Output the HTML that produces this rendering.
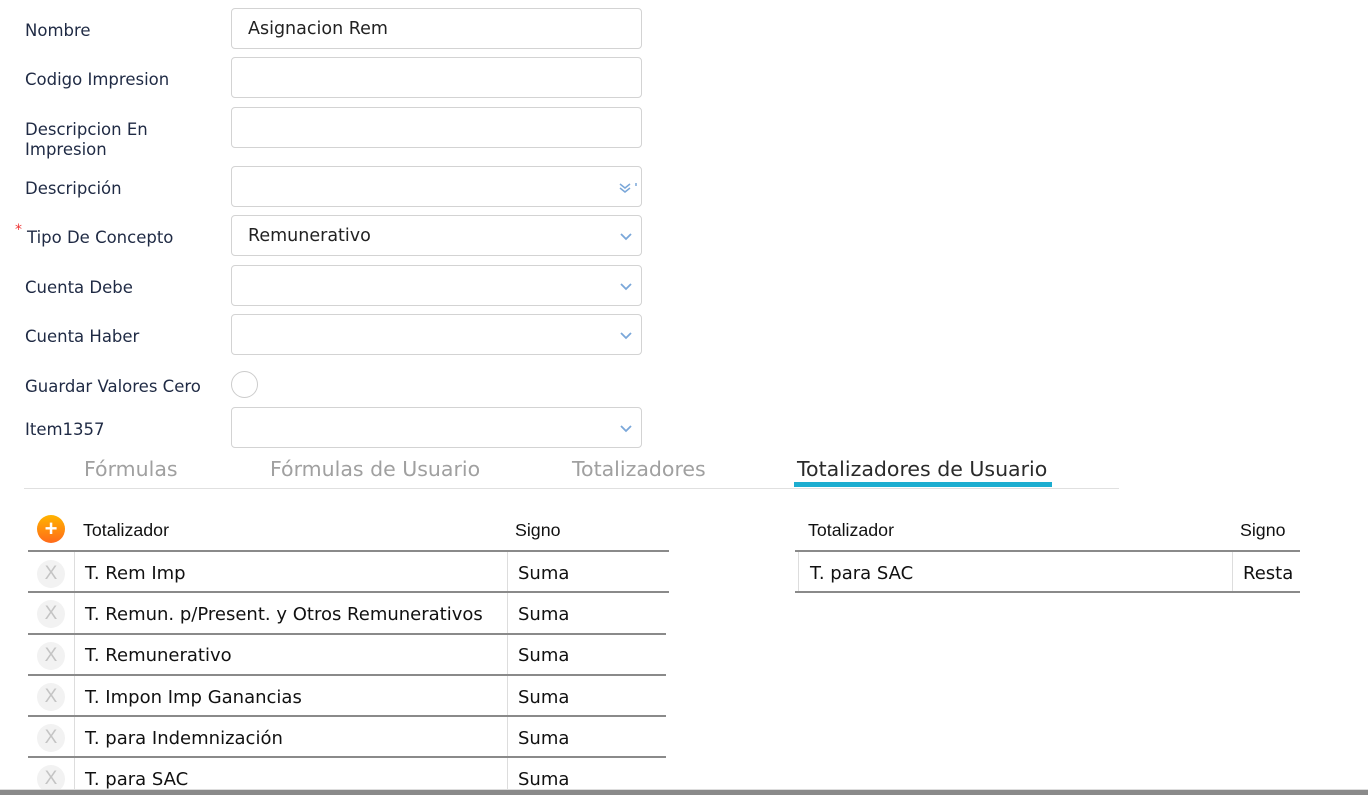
<!DOCTYPE html>
<html><head><meta charset="utf-8"><style>
*{margin:0;padding:0;box-sizing:border-box}
body{width:1368px;height:795px;background:#fff;position:relative;overflow:hidden;font-family:"DejaVu Sans","Liberation Sans",sans-serif}
.l{position:absolute;left:25px;font-size:16.5px;color:#1f2a44;line-height:20px;margin-top:1px}
.in{position:absolute;left:231px;width:411px;height:41px;border:1px solid #d3d3d3;border-radius:4px;font-size:17.5px;color:#222;padding:10px 16px;line-height:21px}
.chev{position:absolute;right:8px;top:15px}
.tab{position:absolute;top:457px;font-size:20.5px;color:#a0a0a0;font-family:"DejaVu Sans",sans-serif}
.h{position:absolute;font-family:"Liberation Sans",sans-serif;font-size:17.8px;color:#111}
.line{position:absolute;height:2px;background:#8a8a8a}
.vl{position:absolute;width:1px;background:#ddd}
.c{position:absolute;font-size:18px;color:#111}
.x{position:absolute;left:37px;width:28px;height:28px;border-radius:50%;background:#f2f2f2;color:#c4c4c4;font-family:"Liberation Sans",sans-serif;font-size:19px;text-align:center;line-height:28px}
</style></head><body>
<div class="l" style="top:20px">Nombre</div>
<div class="in" style="top:8px">Asignacion Rem</div>
<div class="l" style="top:69px">Codigo Impresion</div>
<div class="in" style="top:57px"></div>
<div class="l" style="top:119px">Descripcion En<br>Impresion</div>
<div class="in" style="top:107px"></div>
<div class="l" style="top:178px">Descripción</div>
<div class="in" style="top:166px"><svg class="chev" style="right:2px;top:13px" width="22" height="14"><path d="M3 4l5 4 5-4M3 8l5 4 5-4" stroke="#7aa7d9" stroke-width="1.5" fill="none"/><path d="M19 3v3" stroke="#7aa7d9" stroke-width="1.5"/></svg></div>
<div class="l" style="top:227px;left:27px">Tipo De Concepto</div>
<div style="position:absolute;left:15px;top:222px;color:#e33;font-size:14px">*</div>
<div class="in" style="top:215px">Remunerativo<svg class="chev" width="14" height="10"><path d="M2 3l5 5 5-5" stroke="#7aa7d9" stroke-width="1.8" fill="none"/></svg></div>
<div class="l" style="top:277px">Cuenta Debe</div>
<div class="in" style="top:265px"><svg class="chev" width="14" height="10"><path d="M2 3l5 5 5-5" stroke="#7aa7d9" stroke-width="1.8" fill="none"/></svg></div>
<div class="l" style="top:326px">Cuenta Haber</div>
<div class="in" style="top:314px"><svg class="chev" width="14" height="10"><path d="M2 3l5 5 5-5" stroke="#7aa7d9" stroke-width="1.8" fill="none"/></svg></div>
<div class="l" style="top:376px">Guardar Valores Cero</div>
<div style="position:absolute;left:231px;top:371px;width:27px;height:27px;border:1px solid #ccc;border-radius:50%"></div>
<div class="l" style="top:419px">Item1357</div>
<div class="in" style="top:407px"><svg class="chev" width="14" height="10"><path d="M2 3l5 5 5-5" stroke="#7aa7d9" stroke-width="1.8" fill="none"/></svg></div>

<div class="tab" style="left:84px">Fórmulas</div>
<div class="tab" style="left:270px">Fórmulas de Usuario</div>
<div class="tab" style="left:572px">Totalizadores</div>
<div class="tab" style="left:797px;color:#2a2a2a">Totalizadores de Usuario</div>
<div style="position:absolute;left:24px;top:488px;width:1095px;height:1px;background:#e0e0e0"></div>
<div style="position:absolute;left:794px;top:482px;width:258px;height:5px;background:#1cadd0"></div>

<div style="position:absolute;left:37px;top:515px;width:28px;height:28px;border-radius:50%;background:linear-gradient(#ffb400,#ff6a1a);color:#fff;font-family:'Liberation Sans';font-weight:bold;font-size:22px;text-align:center;line-height:27px">+</div>
<div class="h" style="left:83px;top:520px">Totalizador</div>
<div class="h" style="left:515px;top:520px">Signo</div>
<div class="line" style="left:28px;top:550px;width:641px"></div>
<div class="vl" style="left:74px;top:552px;height:243px"></div>
<div class="vl" style="left:507px;top:552px;height:243px"></div>
<div class="line" style="left:28px;top:591px;width:641px"></div>
<div class="line" style="left:28px;top:633px;width:638px"></div>
<div class="line" style="left:28px;top:674px;width:638px"></div>
<div class="line" style="left:28px;top:715px;width:638px"></div>
<div class="line" style="left:28px;top:756px;width:638px"></div>

<div class="x" style="top:560px">X</div><div class="c" style="left:85px;top:563px">T. Rem Imp</div><div class="c" style="left:518px;top:563px">Suma</div>
<div class="x" style="top:600px">X</div><div class="c" style="left:85px;top:604px">T. Remun. p/Present. y Otros Remunerativos</div><div class="c" style="left:518px;top:604px">Suma</div>
<div class="x" style="top:642px">X</div><div class="c" style="left:85px;top:645px">T. Remunerativo</div><div class="c" style="left:518px;top:645px">Suma</div>
<div class="x" style="top:683px">X</div><div class="c" style="left:85px;top:687px">T. Impon Imp Ganancias</div><div class="c" style="left:518px;top:687px">Suma</div>
<div class="x" style="top:724px">X</div><div class="c" style="left:85px;top:728px">T. para Indemnización</div><div class="c" style="left:518px;top:728px">Suma</div>
<div class="x" style="top:765px">X</div><div class="c" style="left:85px;top:769px">T. para SAC</div><div class="c" style="left:518px;top:769px">Suma</div>

<div class="h" style="left:808px;top:520px">Totalizador</div>
<div class="h" style="left:1240px;top:520px">Signo</div>
<div class="line" style="left:795px;top:550px;width:505px"></div>
<div class="vl" style="left:798px;top:552px;height:40px"></div>
<div class="vl" style="left:1232px;top:552px;height:40px"></div>
<div class="line" style="left:795px;top:591px;width:505px"></div>
<div class="c" style="left:810px;top:563px">T. para SAC</div><div class="c" style="left:1243px;top:563px">Resta</div>

<div style="position:absolute;left:0;top:789px;width:1368px;height:6px;background:#8a8a8a;border-top:1px solid #ddd"></div>
</body></html>
